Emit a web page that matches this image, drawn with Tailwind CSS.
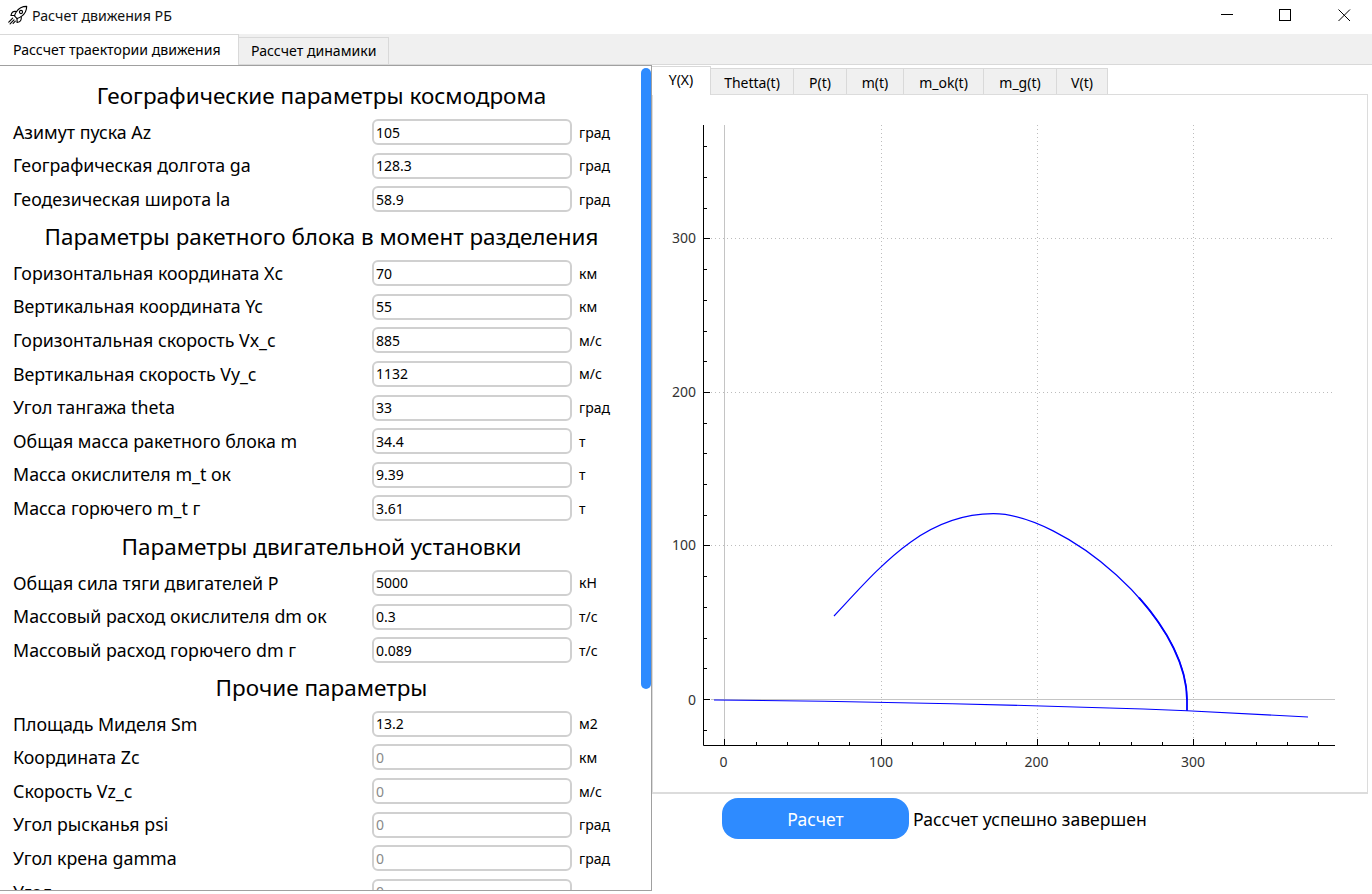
<!DOCTYPE html>
<html lang="ru">
<head>
    <meta charset="UTF-8">
    <title>Расчет движения РБ</title>
    <script src="https://cdn.jsdelivr.net/npm/@tailwindcss/browser@4"></script>
</head>
<body class="flex flex-col h-screen overflow-hidden bg-white text-black font-['Noto_Sans',sans-serif]">
    <!-- Заголовок окна -->
    <header class="h-[34px] flex items-center relative">
        <svg class="ml-[7px] w-[21px] h-[21px] -mt-[3px]" viewBox="0 0 24 24" fill="none" stroke="black" stroke-width="1.3" stroke-linecap="round" stroke-linejoin="round">
            <path d="m11.5 15.5-3-3a22 22 0 0 1 2-4.5C13.5 3.5 18 1.500 22.500 1.500c0 3-.8 8-6 11.500a22 22 0 0 1-5 2.500z"/>
            <circle cx="16" cy="8" r="1.800"/>
            <path d="M8.800 12H4.500s.6-3 2-4c1.600-1.100 4.500-.5 4.500-.5"/>
            <path d="M11.500 15.500V20s3-.6 4-2c1.100-1.600.8-4.500.8-4.500"/>
            <path d="M6.500 15 2 19.500M8 17l-4.500 4.500M9.500 18.500 7 21"/>
        </svg>
        <span class="ml-[4px] -mt-[2px] text-[14.200px] text-[#111]">Расчет движения РБ</span>
        <svg class="absolute left-[1215px] top-0 w-[157px] h-[34px]" viewBox="1215 0 157 34" fill="none" stroke="black" stroke-width="1">
            <path d="M1221 14.500h12"/>
            <rect x="1279.500" y="9.500" width="11" height="11"/>
            <path d="M1338.500 9.500l11.500 11.500M1350 9.500l-11.500 11.500"/>
        </svg>
    </header>

    <!-- Вкладки верхнего уровня -->
    <nav class="h-[30px] flex shrink-0 bg-[#f0f0f0] text-[14.100px]">
        <div class="w-[239px] h-[31px] z-10 bg-white border-t border-r border-[#d9d9d9] pl-[13px] pt-[4px]">Рассчет траектории движения</div>
        <div class="w-[150px] h-[28px] mt-[3px] border-t border-r border-[#d9d9d9] pl-[12px] pt-[2px]">Рассчет динамики</div>
    </nav>

    <main class="flex-1 flex min-h-0 border-t border-[#d9d9d9]">
        <!-- Левая панель с параметрами -->
        <section class="relative w-[652px] h-[826px] shrink-0 overflow-hidden bg-white border-t border-r border-b border-[#a0a0a0] pt-[13px]">
            <h2 class="h-[40px] pb-[6px] flex items-center justify-center pr-[8px] text-[22.500px]">Географические параметры космодрома</h2>
            <div class="flex items-center h-[33.600px] pl-[13px] pb-[7.600px] text-[17.800px]"><span class="w-[359px]">Азимут пуска Az</span><input class="w-[200px] h-[26px] rounded-[6px] border-2 border-[#d0d0d0] px-[2px] text-[14px]" value="105"><span class="ml-[7px] text-[14px]">град</span></div>
            <div class="flex items-center h-[33.600px] pl-[13px] pb-[7.600px] text-[17.800px]"><span class="w-[359px]">Географическая долгота ga</span><input class="w-[200px] h-[26px] rounded-[6px] border-2 border-[#d0d0d0] px-[2px] text-[14px]" value="128.3"><span class="ml-[7px] text-[14px]">град</span></div>
            <div class="flex items-center h-[33.600px] pl-[13px] pb-[7.600px] text-[17.800px]"><span class="w-[359px]">Геодезическая широта la</span><input class="w-[200px] h-[26px] rounded-[6px] border-2 border-[#d0d0d0] px-[2px] text-[14px]" value="58.9"><span class="ml-[7px] text-[14px]">град</span></div>

            <h2 class="h-[40.400px] pb-[6px] flex items-center justify-center pr-[8px] text-[22.400px]">Параметры ракетного блока в момент разделения</h2>
            <div class="flex items-center h-[33.600px] pl-[13px] pb-[7.600px] text-[17.800px]"><span class="w-[359px]">Горизонтальная координата Xc</span><input class="w-[200px] h-[26px] rounded-[6px] border-2 border-[#d0d0d0] px-[2px] text-[14px]" value="70"><span class="ml-[7px] text-[14px]">км</span></div>
            <div class="flex items-center h-[33.600px] pl-[13px] pb-[7.600px] text-[17.800px]"><span class="w-[359px]">Вертикальная координата Yc</span><input class="w-[200px] h-[26px] rounded-[6px] border-2 border-[#d0d0d0] px-[2px] text-[14px]" value="55"><span class="ml-[7px] text-[14px]">км</span></div>
            <div class="flex items-center h-[33.600px] pl-[13px] pb-[7.600px] text-[17.800px]"><span class="w-[359px]">Горизонтальная скорость Vx_c</span><input class="w-[200px] h-[26px] rounded-[6px] border-2 border-[#d0d0d0] px-[2px] text-[14px]" value="885"><span class="ml-[7px] text-[14px]">м/с</span></div>
            <div class="flex items-center h-[33.600px] pl-[13px] pb-[7.600px] text-[17.800px]"><span class="w-[359px]">Вертикальная скорость Vy_c</span><input class="w-[200px] h-[26px] rounded-[6px] border-2 border-[#d0d0d0] px-[2px] text-[14px]" value="1132"><span class="ml-[7px] text-[14px]">м/с</span></div>
            <div class="flex items-center h-[33.600px] pl-[13px] pb-[7.600px] text-[17.800px]"><span class="w-[359px]">Угол тангажа theta</span><input class="w-[200px] h-[26px] rounded-[6px] border-2 border-[#d0d0d0] px-[2px] text-[14px]" value="33"><span class="ml-[7px] text-[14px]">град</span></div>
            <div class="flex items-center h-[33.600px] pl-[13px] pb-[7.600px] text-[17.800px]"><span class="w-[359px]">Общая масса ракетного блока m</span><input class="w-[200px] h-[26px] rounded-[6px] border-2 border-[#d0d0d0] px-[2px] text-[14px]" value="34.4"><span class="ml-[7px] text-[14px]">т</span></div>
            <div class="flex items-center h-[33.600px] pl-[13px] pb-[7.600px] text-[17.800px]"><span class="w-[359px]">Масса окислителя m_t ок</span><input class="w-[200px] h-[26px] rounded-[6px] border-2 border-[#d0d0d0] px-[2px] text-[14px]" value="9.39"><span class="ml-[7px] text-[14px]">т</span></div>
            <div class="flex items-center h-[33.600px] pl-[13px] pb-[7.600px] text-[17.800px]"><span class="w-[359px]">Масса горючего m_t г</span><input class="w-[200px] h-[26px] rounded-[6px] border-2 border-[#d0d0d0] px-[2px] text-[14px]" value="3.61"><span class="ml-[7px] text-[14px]">т</span></div>

            <h2 class="h-[41px] pb-[6px] flex items-center justify-center pr-[8px] text-[22.500px]">Параметры двигательной установки</h2>
            <div class="flex items-center h-[33.600px] pl-[13px] pb-[7.600px] text-[17.800px]"><span class="w-[359px]">Общая сила тяги двигателей P</span><input class="w-[200px] h-[26px] rounded-[6px] border-2 border-[#d0d0d0] px-[2px] text-[14px]" value="5000"><span class="ml-[7px] text-[14px]">кН</span></div>
            <div class="flex items-center h-[33.600px] pl-[13px] pb-[7.600px] text-[17.800px]"><span class="w-[359px]">Массовый расход окислителя dm ок</span><input class="w-[200px] h-[26px] rounded-[6px] border-2 border-[#d0d0d0] px-[2px] text-[14px]" value="0.3"><span class="ml-[7px] text-[14px]">т/с</span></div>
            <div class="flex items-center h-[33.600px] pl-[13px] pb-[7.600px] text-[17.800px]"><span class="w-[359px]">Массовый расход горючего dm г</span><input class="w-[200px] h-[26px] rounded-[6px] border-2 border-[#d0d0d0] px-[2px] text-[14px]" value="0.089"><span class="ml-[7px] text-[14px]">т/с</span></div>

            <h2 class="h-[40.200px] pb-[6px] flex items-center justify-center pr-[8px] text-[22.500px]">Прочие параметры</h2>
            <div class="flex items-center h-[33.600px] pl-[13px] pb-[7.600px] text-[17.800px]"><span class="w-[359px]">Площадь Миделя Sm</span><input class="w-[200px] h-[26px] rounded-[6px] border-2 border-[#d0d0d0] px-[2px] text-[14px]" value="13.2"><span class="ml-[7px] text-[14px]">м2</span></div>
            <div class="flex items-center h-[33.600px] pl-[13px] pb-[7.600px] text-[17.800px]"><span class="w-[359px]">Координата Zc</span><input class="w-[200px] h-[26px] rounded-[6px] border-2 border-[#d0d0d0] px-[2px] text-[14px] text-[#8a8a8a]" value="0"><span class="ml-[7px] text-[14px]">км</span></div>
            <div class="flex items-center h-[33.600px] pl-[13px] pb-[7.600px] text-[17.800px]"><span class="w-[359px]">Скорость Vz_c</span><input class="w-[200px] h-[26px] rounded-[6px] border-2 border-[#d0d0d0] px-[2px] text-[14px] text-[#8a8a8a]" value="0"><span class="ml-[7px] text-[14px]">м/с</span></div>
            <div class="flex items-center h-[33.600px] pl-[13px] pb-[7.600px] text-[17.800px]"><span class="w-[359px]">Угол рысканья psi</span><input class="w-[200px] h-[26px] rounded-[6px] border-2 border-[#d0d0d0] px-[2px] text-[14px] text-[#8a8a8a]" value="0"><span class="ml-[7px] text-[14px]">град</span></div>
            <div class="flex items-center h-[33.600px] pl-[13px] pb-[7.600px] text-[17.800px]"><span class="w-[359px]">Угол крена gamma</span><input class="w-[200px] h-[26px] rounded-[6px] border-2 border-[#d0d0d0] px-[2px] text-[14px] text-[#8a8a8a]" value="0"><span class="ml-[7px] text-[14px]">град</span></div>
            <div class="flex items-center h-[33.600px] pl-[13px] pb-[7.600px] text-[17.800px]"><span class="w-[359px]">Угол</span><input class="w-[200px] h-[26px] rounded-[6px] border-2 border-[#d0d0d0] px-[2px] text-[14px] text-[#8a8a8a]" value="0"></div>

            <!-- Ползунок прокрутки -->
            <div class="absolute left-[641px] top-[2px] w-[10px] h-[621px] rounded-full bg-[#2e8bff]"></div>
        </section>

        <!-- Правая панель с графиками -->
        <section class="flex-1 flex flex-col min-w-0 pr-[4px]">
            <div class="h-[29px] flex items-end text-[14px] text-center shrink-0">
                <div class="w-[59px] h-[29px] pt-[2px] bg-white border-t border-r border-[#d9d9d9] relative top-px">Y(X)</div>
                <div class="w-[83px] h-[26px] pt-[3px] bg-[#f0f0f0] border-t border-r border-[#d9d9d9]">Thetta(t)</div>
                <div class="w-[53px] h-[26px] pt-[3px] bg-[#f0f0f0] border-t border-r border-[#d9d9d9]">P(t)</div>
                <div class="w-[57px] h-[26px] pt-[3px] bg-[#f0f0f0] border-t border-r border-[#d9d9d9]">m(t)</div>
                <div class="w-[80px] h-[26px] pt-[3px] bg-[#f0f0f0] border-t border-r border-[#d9d9d9]">m_ok(t)</div>
                <div class="w-[73px] h-[26px] pt-[3px] bg-[#f0f0f0] border-t border-r border-[#d9d9d9]">m_g(t)</div>
                <div class="w-[51px] h-[26px] pt-[3px] bg-[#f0f0f0] border-t border-r border-[#d9d9d9]">V(t)</div>
            </div>
            <div class="h-[700px] border border-b-2 border-[#dcdcdc] shrink-0">
                <svg class="block w-[714px] h-[697px]" viewBox="653 95 714 697" fill="none">
                    <g stroke="#bdbdbd" stroke-dasharray="1 3">
                        <path d="M711 238.500H1335M711 392.500H1335M711 545.500H1335"/>
                        <path d="M881.500 125V738M1037.500 125V738M1193.500 125V738"/>
                    </g>
                    <path d="M724.500 125V745M711 699.500H1335" stroke="#c4c4c4"/>
                    <path d="M703.500 125V745.500H1335" stroke="black"/>
                    <path d="M703 238.500h7M703 392.500h7M703 545.500h7M703 699.500h7" stroke="black"/>
                    <path d="M703 146.500h4M703 177.500h4M703 208.500h4M703 269.500h4M703 300.500h4M703 331.500h4M703 361.500h4M703 423.500h4M703 453.500h4M703 484.500h4M703 515.500h4M703 576.500h4M703 607.500h4M703 638.500h4M703 668.500h4M703 730.500h4" stroke="black"/>
                    <path d="M724.500 745v-6M881.500 745v-6M1037.500 745v-6M1193.500 745v-6" stroke="black"/>
                    <path d="M756.500 745v-3M787.500 745v-3M818.500 745v-3M849.500 745v-3M912.500 745v-3M943.500 745v-3M975.500 745v-3M1006.500 745v-3M1068.500 745v-3M1099.500 745v-3M1131.500 745v-3M1162.500 745v-3M1225.500 745v-3M1256.500 745v-3M1287.500 745v-3M1318.500 745v-3" stroke="black"/>
                    <g fill="#333" font-size="14" font-family="Noto Sans, sans-serif">
                        <text x="696" y="243" text-anchor="end">300</text>
                        <text x="696" y="397" text-anchor="end">200</text>
                        <text x="696" y="550" text-anchor="end">100</text>
                        <text x="696" y="705" text-anchor="end">0</text>
                        <text x="723.500" y="767" text-anchor="middle">0</text>
                        <text x="881" y="767" text-anchor="middle">100</text>
                        <text x="1036.500" y="767" text-anchor="middle">200</text>
                        <text x="1193" y="767" text-anchor="middle">300</text>
                    </g>
                    <path d="M714 700 C850 701 1000 704 1187 710.700 L1308 717" stroke="#0000ff" stroke-width="1.100"/>
                    <path d="M834 616 C879 568 923 513.700 993.300 513.700 C1063.300 513.700 1187 615 1187 700" stroke="#0000ff" stroke-width="1.200"/>
                    <path d="M1139 597.700 C1167.200 629.400 1187 666 1187 700 V710.700" stroke="#0000ff" stroke-width="1.800"/>
                </svg>
            </div>
            <div class="flex items-center pl-[70px] pt-[4px]">
                <button class="w-[187px] h-[41px] pt-[1px] rounded-[16px] bg-[#2e8bff] text-white text-[17.500px]">Расчет</button>
                <span class="ml-[4px] mt-[2px] text-[17.600px]">Рассчет успешно завершен</span>
            </div>
        </section>
    </main>
</body>
</html>
